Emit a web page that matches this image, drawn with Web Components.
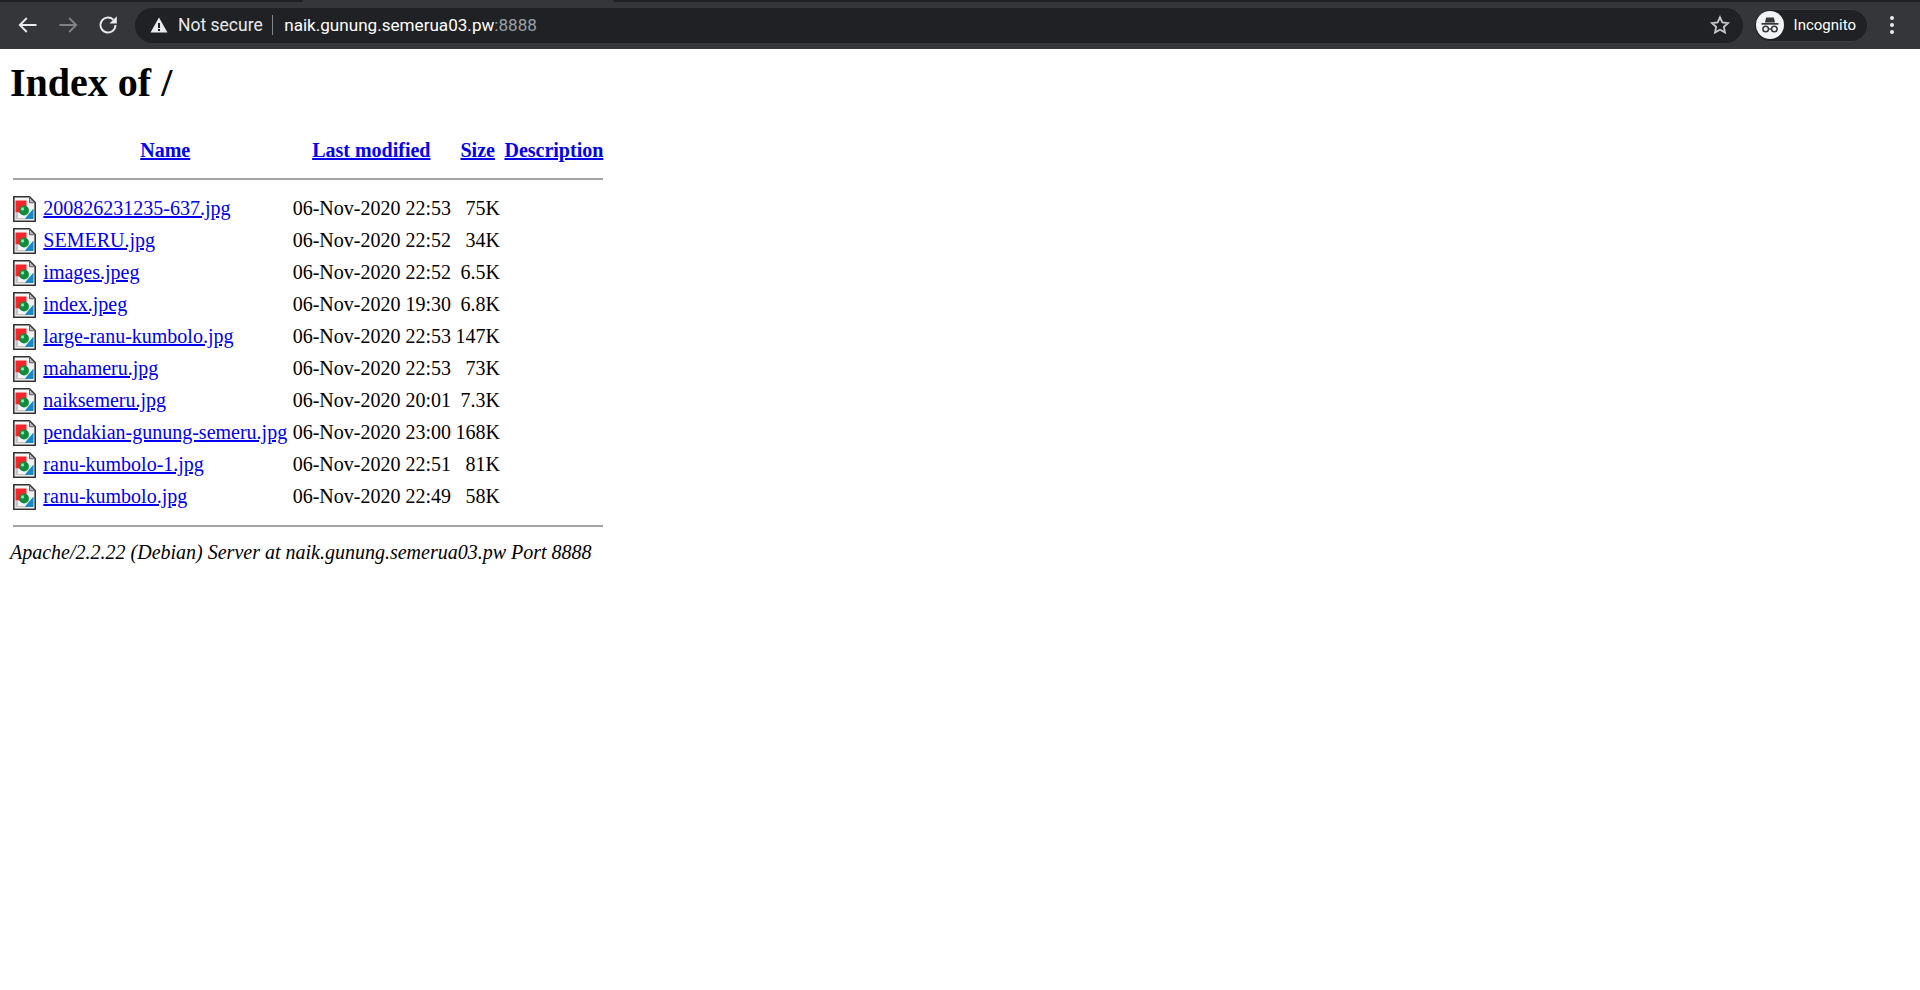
<!DOCTYPE html>
<html><head><meta charset="utf-8"><title>Index of /</title>
<style>html,body{margin:0;padding:0;background:#fff}body{display:block}</style>
</head><body>
<browser-toolbar></browser-toolbar>
<index-page></index-page>
<script>
class BrowserToolbar extends HTMLElement{
  constructor(){super();const s=this.attachShadow({mode:'open'});s.innerHTML=`<style>
:host{display:block;height:49px;background:#35363a;font-family:"Roboto","Open Sans",sans-serif;position:relative;box-sizing:border-box;padding-top:2px}
.strip{position:absolute;top:0;height:2px;background:#202124}
.s1{left:0;width:303px;border-bottom-right-radius:3px}
.s2{left:613px;right:0;border-bottom-left-radius:3px}
.row{display:flex;align-items:center;height:46px}
.nav{width:40px;height:40px;display:flex;align-items:center;justify-content:center;flex:none}
.nav:first-child{margin-left:7.5px}
.nav svg{display:block}
.omni{flex:1;height:35px;background:#202124;border-radius:18px;display:flex;align-items:center;margin-left:7.5px;color:#e8eaed;font-size:17px;padding:0 12px 0 14px;min-width:0}
.warn{width:20px;height:20px;flex:none;margin-right:9px}
.sec{color:#e8eaed;font-size:17.5px}
.sep{width:1px;height:20px;background:#80868b;margin:0 11px 0 9.5px;flex:none}
.url{flex:1;color:#fff;font-size:17.1px}.url span{color:#9aa0a6}
.star{flex:none;display:block}
.inc{flex:none;display:flex;align-items:center;height:33px;border-radius:17px;background:#202124;box-shadow:inset 0 0 0 1px #3c3d41;margin-left:11px;padding:0 12px 0 2px;color:#fff;font-size:15px}
.badge{width:28px;height:28px;border-radius:50%;background:#f1f3f4;display:flex;align-items:center;justify-content:center;margin-right:10px}
.menu{width:48px;padding-right:4px;flex:none;display:flex;justify-content:center}
</style>
<div class="strip s1"></div><div class="strip s2"></div>
<div class="row">
<div class="nav"><svg width="20" height="20" viewBox="0 0 20 20" fill="none" stroke="#e8eaed" stroke-width="1.9"><path d="M18.500 10H1.800M8.800 3 1.800 10l7 7"/></svg></div>
<div class="nav"><svg width="20" height="20" viewBox="0 0 20 20" fill="none" stroke="#7f8286" stroke-width="1.9"><path d="M1.500 10h16.700M11.200 3l7 7-7 7"/></svg></div>
<div class="nav"><svg width="20" height="20" viewBox="0 0 20 20"><path fill="none" stroke="#e8eaed" stroke-width="1.9" d="M15.300 4.700A7.500 7.500 0 1 0 17.500 10"/><path fill="#e8eaed" d="M11.500 8.500h7.300V1.200z"/></svg></div>
<div class="omni">
<svg class="warn" viewBox="0 0 20 20"><path fill="#e8eaed" d="M10 2.500 1.500 17.500h17z"/><path fill="#202124" d="M9 8h2v5H9zM9 14h2v2H9z"/></svg>
<span class="sec">Not secure</span><span class="sep"></span>
<div class="url">naik.gunung.semerua03.pw<span>:8888</span></div>
<svg class="star" width="22" height="22" viewBox="0 0 24 24" fill="none" stroke="#c4c7c9" stroke-width="2"><path d="M12 3.600l2.600 5.600 6.100.7-4.500 4.200 1.200 6L12 17.100l-5.400 3 1.200-6-4.500-4.200 6.100-.7z"/></svg>
</div>
<div class="inc"><span class="badge"><svg width="24" height="24" viewBox="0 0 24 24" fill="#35363a"><path d="M8.200 4.500h7.600l1.300 5H6.900z"/><rect x="3.500" y="10" width="17" height="1.700"/><circle cx="7.700" cy="16" r="2.800" fill="none" stroke="#35363a" stroke-width="1.500"/><circle cx="16.300" cy="16" r="2.800" fill="none" stroke="#35363a" stroke-width="1.500"/><path d="M10.400 15.400h3.200v1.300h-3.200z"/></svg></span>Incognito</div>
<div class="menu"><svg width="6" height="20" viewBox="0 0 6 20" fill="#e8eaed"><circle cx="3" cy="3" r="2"/><circle cx="3" cy="10" r="2"/><circle cx="3" cy="17" r="2"/></svg></div>
</div>`;}
}
customElements.define('browser-toolbar',BrowserToolbar);

class FileIcon extends HTMLElement{
  constructor(){super();this.attachShadow({mode:'open'}).innerHTML=`<style>:host{display:block;width:23px;height:26px;margin:.75px 0}svg{display:block;width:100%;height:100%}</style>
<svg viewBox="0 0 23 26">
<path d="M.8.800H16.500L22.200 6.500V25.200H.8z" fill="#f4f4f4" stroke="#333" stroke-width="1.600"/>
<path d="M16.500 1.500V6.800H21.800z" fill="#b5b5b5" stroke="#666" stroke-width="1"/>
<path d="M2.500 4.500h11v12h-11z" fill="#f5262c"/>
<path d="M2.500 16.500h2.500V22h10v1.200H2.500z" fill="#c4c4c4"/>
<path d="M14 20 20.500 12.500V23H12z" fill="#1487c4"/>
<circle cx="11" cy="14.500" r="5" fill="#0f8d3f"/>
<circle cx="9.600" cy="12.900" r="1.600" fill="#9fe0a8"/>
</svg>`;}
}
customElements.define('file-icon',FileIcon);

const files=[
['200826231235-637.jpg','06-Nov-2020 22:53','75K'],
['SEMERU.jpg','06-Nov-2020 22:52','34K'],
['images.jpeg','06-Nov-2020 22:52','6.5K'],
['index.jpeg','06-Nov-2020 19:30','6.8K'],
['large-ranu-kumbolo.jpg','06-Nov-2020 22:53','147K'],
['mahameru.jpg','06-Nov-2020 22:53','73K'],
['naiksemeru.jpg','06-Nov-2020 20:01','7.3K'],
['pendakian-gunung-semeru.jpg','06-Nov-2020 23:00','168K'],
['ranu-kumbolo-1.jpg','06-Nov-2020 22:51','81K'],
['ranu-kumbolo.jpg','06-Nov-2020 22:49','58K']];

class IndexPage extends HTMLElement{
  constructor(){super();const rows=files.map(f=>`<tr><td class="ic"><file-icon></file-icon></td><td><a href="#">${f[0]}</a></td><td class="r d">${f[1]}</td><td class="r">${f[2]}</td><td>&nbsp;</td></tr>`).join('');
  this.attachShadow({mode:'open'}).innerHTML=`<style>
:host{display:block;padding:11px 10px 10px;font:20px/normal "Liberation Serif","Times New Roman",serif;color:#000}
h1{font-size:40px;margin:0 0 30px;line-height:46px;font-weight:bold}
table{border-collapse:separate;border-spacing:2.5px}
td,th{padding:1.25px;white-space:nowrap}
td{text-align:left}td.r{text-align:right}
td.ic{width:25.6px}
td.d{padding-left:2.25px}
a{color:#00e}
th{text-align:center;font-weight:bold}
hr{border:0;height:2px;background:#a3a3a3;display:block}
.h1{margin:11px 0 10.5px}.h2{margin:10px 0 11px}
address{font-style:italic}
</style>
<h1>Index of /</h1>
<table>
<tr><th>&nbsp;</th><th><a href="#">Name</a></th><th><a href="#">Last modified</a></th><th><a href="#">Size</a></th><th><a href="#">Description</a></th></tr>
<tr><th colspan="5"><hr class="h1"></th></tr>
${rows}
<tr><th colspan="5"><hr class="h2"></th></tr>
</table>
<address>Apache/2.2.22 (Debian) Server at naik.gunung.semerua03.pw Port 8888</address>`;}
}
customElements.define('index-page',IndexPage);
</script>
</body></html>
